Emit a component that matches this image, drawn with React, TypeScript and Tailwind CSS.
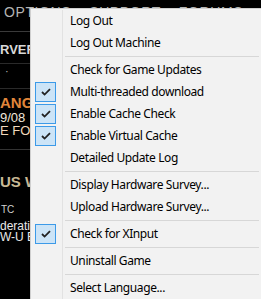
import { Fragment } from 'react';

type MenuEntry =
  | { kind: 'item'; label: string; checked?: boolean }
  | { kind: 'sep' };

const entries: MenuEntry[] = [
  { kind: 'item', label: 'Log Out' },
  { kind: 'item', label: 'Log Out Machine' },
  { kind: 'sep' },
  { kind: 'item', label: 'Check for Game Updates' },
  { kind: 'item', label: 'Multi-threaded download', checked: true },
  { kind: 'item', label: 'Enable Cache Check', checked: true },
  { kind: 'item', label: 'Enable Virtual Cache', checked: true },
  { kind: 'item', label: 'Detailed Update Log' },
  { kind: 'sep' },
  { kind: 'item', label: 'Display Hardware Survey...' },
  { kind: 'item', label: 'Upload Hardware Survey...' },
  { kind: 'sep' },
  { kind: 'item', label: 'Check for XInput', checked: true },
  { kind: 'sep' },
  { kind: 'item', label: 'Uninstall Game' },
  { kind: 'sep' },
  { kind: 'item', label: 'Select Language...' },
];

export default function App() {
  return (
    <div className="relative w-[261px] h-[299px] overflow-hidden bg-black font-['Liberation_Sans',Arial,sans-serif]">
      {/* Page behind the menu */}
      <div className="flex gap-[18px] pl-[4px] pt-[2px] h-[31px] whitespace-nowrap text-[14px] tracking-[0.6px] text-[#b4b4b4]">
        <span>OPTIONS</span>
        <span>SUPPORT</span>
        <span>FORUMS</span>
        <span>STORE</span>
      </div>
      <div className="border-t border-[#3a3a3a]" />
      <div className="h-[31px] pt-[8px] text-[13px] font-bold text-[#d8d8d8] whitespace-nowrap">RVER</div>
      <div className="border-t border-[#2a2a2a]" />
      <div className="h-[24px] pl-[5px] text-[11px] leading-[14px] text-[#bbbbbb]">·</div>
      <div className="border-t border-[#2a2a2a]" />
      <div className="flex flex-col pt-[5px] whitespace-nowrap">
        <span className="text-[15px] leading-[17px] font-bold text-[#e0863a]">ANGE</span>
        <span className="text-[13px] leading-[13px] text-[#f0e6da]">9/08</span>
        <span className="text-[13px] leading-[13px] text-[#f0d8bc]">E FOU</span>
      </div>
      <div className="h-[12px]" />
      <div className="border-t border-[#333333]" />
      <div className="h-[24px]" />
      <div className="text-[15px] leading-[16px] font-bold text-[#c8b894] whitespace-nowrap">US W</div>
      <div className="pt-[14px] text-[10px] leading-[11px] text-[#d0d0d0] pl-[1px]">TC</div>
      <div className="flex flex-col pt-[6px] text-[12px] leading-[11px] text-[#e8e8e8] whitespace-nowrap">
        <span>deratio</span>
        <span>W-U B</span>
      </div>

      {/* Context menu overlay */}
      <div className="absolute left-[30px] top-[8px] w-[233px] border border-[#cfcfcf] bg-[#f2f2f2] pt-[1px] font-['Noto_Sans',sans-serif] text-[12px] tracking-[-0.4px] text-black">
        {entries.map((e, i) => (
          <Fragment key={i}>
            {e.kind === 'sep' ? (
              <div className="flex h-[5px]">
                <div className="w-[31px] shrink-0" />
                <div className="flex-1 border-l border-[#e2e2e2] flex items-center">
                  <div className="ml-[2px] mr-[3px] flex-1 h-px bg-[#d7d7d7]" />
                </div>
              </div>
            ) : (
              <div className="flex h-[22px]">
                <div className="w-[31px] shrink-0 flex items-center pl-[4px]">
                  {e.checked && (
                    <div className="w-[21px] h-[20px] border border-[#3c9ae8] bg-[#cce4f7] flex items-center justify-center">
                      <svg width="10" height="8" viewBox="0 0 10 8">
                        <polyline points="1,4 3.6,6.6 9,1.2" fill="none" stroke="#222" strokeWidth="1.8" />
                      </svg>
                    </div>
                  )}
                </div>
                <div className="flex-1 border-l border-[#e2e2e2] pl-[7px] flex items-center whitespace-nowrap">
                  {e.label}
                </div>
              </div>
            )}
          </Fragment>
        ))}
      </div>
    </div>
  );
}
